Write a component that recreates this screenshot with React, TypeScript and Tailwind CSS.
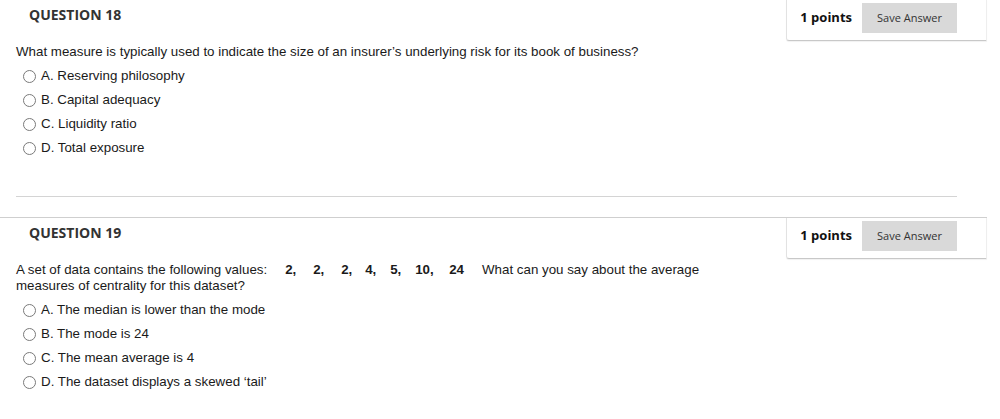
import React from 'react';

type Question = {
  number: number;
  text: React.ReactNode;
  options: string[];
};

const sans = { fontFamily: '"Liberation Sans", Arial, sans-serif' };

const questions: Question[] = [
  {
    number: 18,
    text: 'What measure is typically used to indicate the size of an insurer\u2019s underlying risk for its book of business?',
    options: ['A. Reserving philosophy', 'B. Capital adequacy', 'C. Liquidity ratio', 'D. Total exposure'],
  },
  {
    number: 19,
    text: (
      <>
        A set of data contains the following values:
        <span className="ml-[18px] font-bold">
          <span className="inline-block w-[28px]">2,</span>
          <span className="inline-block w-[28px]">2,</span>
          <span className="inline-block w-[24px]">2,</span>
          <span className="inline-block w-[25px]">4,</span>
          <span className="inline-block w-[25px]">5,</span>
          <span className="inline-block w-[34px]">10,</span>
          <span>24</span>
        </span>
        <span className="ml-[18px]">What can you say about the average</span>
        <br />
        measures of centrality for this dataset?
      </>
    ),
    options: [
      'A. The median is lower than the mode',
      'B. The mode is 24',
      'C. The mean average is 4',
      'D. The dataset displays a skewed \u2018tail\u2019',
    ],
  },
];

function QuestionBlock({ q, first }: { q: Question; first: boolean }) {
  return (
    <div className={`border-t border-[#cfcfcf] ${first ? '-mt-px' : ''}`}>
      <div className="flex items-start justify-between font-['Open_Sans',sans-serif]">
        <h3 className="pl-[29px] pt-[6px] text-[14px] leading-[18px] font-bold text-[#333]">
          QUESTION {q.number}
        </h3>
        <div className="flex items-center rounded-bl-[3px] border-b border-l border-r border-b-[#c8c8c8] border-l-[#e2e2e2] border-r-[#eeeeee] pl-[13px] pr-[29px] pt-[3px] pb-[7px] shadow-[0_1px_1px_rgba(0,0,0,0.06)]">
          <span className="text-[13px] font-bold text-[#111]">1 points</span>
          <button className="ml-[10px] h-[30px] w-[95px] bg-[#d9d9d9] text-[11px] text-[#333]">
            Save Answer
          </button>
        </div>
      </div>

      <div className="pl-[16px] pt-[3px] text-[13.33px] leading-[16px] text-[#1a1a1a]" style={sans}>
        <p>{q.text}</p>
        <ul className="mt-[4px]">
          {q.options.map((opt) => (
            <li key={opt} className="flex h-[24px] items-center pl-[7px]">
              <span className="h-[13px] w-[13px] rounded-full border border-[#7a7a7a] bg-white" />
              <span className="ml-[5px]">{opt}</span>
            </li>
          ))}
        </ul>
      </div>
    </div>
  );
}

export default function App() {
  return (
    <div className="h-[419px] w-[1000px] overflow-hidden bg-white">
      <div className="w-[987px]">
        <QuestionBlock q={questions[0]} first />
        <div className="ml-[16px] mr-[30px] mt-[36px] mb-[20px] border-t border-[#d4d4d4]" />
        <QuestionBlock q={questions[1]} first={false} />
      </div>
    </div>
  );
}
